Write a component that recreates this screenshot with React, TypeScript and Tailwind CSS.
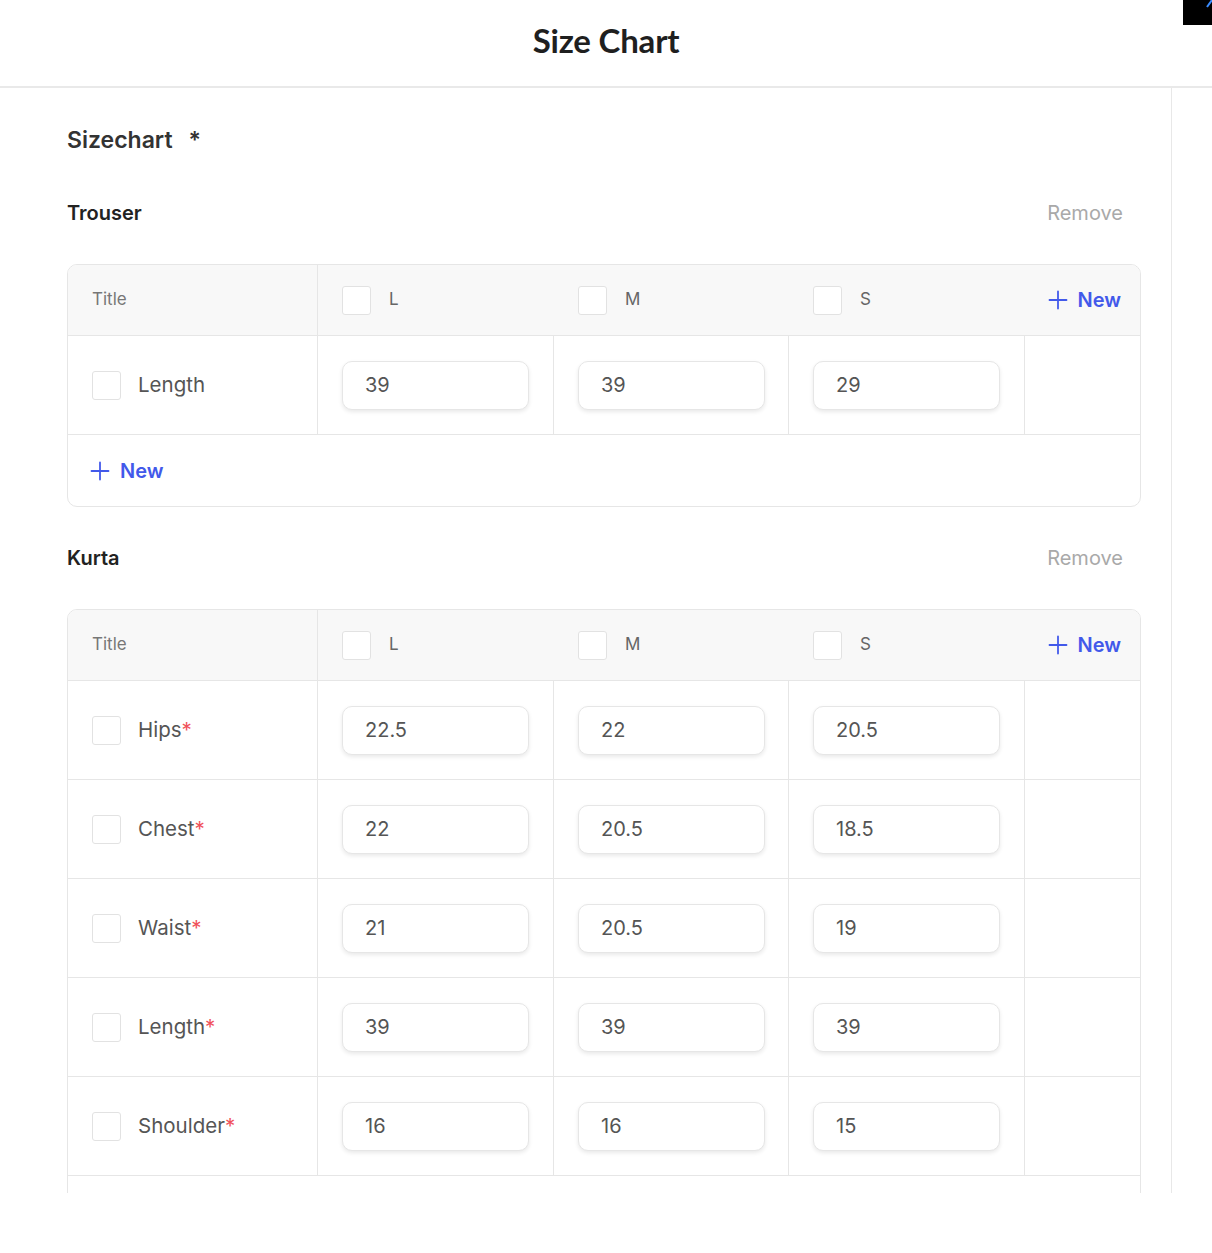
import React from "react";

const Plus = ({ className = "" }: { className?: string }) => (
  <svg viewBox="0 0 20 20" className={className} fill="none" stroke="currentColor" strokeWidth="1.8" strokeLinecap="round">
    <path d="M10 1.5v17M1.5 10h17" />
  </svg>
);

const Check = () => <div className="w-[29px] h-[29px] shrink-0 rounded-[3px] border border-[#e2e2e2] bg-white" />;

const Input = ({ v }: { v: string }) => (
  <div className="w-[187px] h-[49px] rounded-[10px] border border-[#e6e6e6] bg-white shadow-[0_2px_4px_rgba(0,0,0,0.09)] flex items-center pl-[22px] text-[20px] text-[#555]">
    {v}
  </div>
);

const NewBtn = () => (
  <div className="flex items-center gap-[10px] text-[#4259ea] font-semibold text-[20px]">
    <Plus className="w-[20px] h-[20px]" />
    <span>New</span>
  </div>
);

type Row = { label: string; req: boolean; vals: string[] };

const Table = ({ rows, footer }: { rows: Row[]; footer: boolean }) => (
  <div className="rounded-[10px] border border-[#e6e6e6] overflow-hidden">
    <div className="grid grid-cols-[250px_236px_235px_236px_1fr] h-[71px] bg-[#f8f8f8] border-b border-[#e6e6e6]">
      <div className="flex items-center pl-[24px] border-r border-[#e6e6e6] text-[17px] text-[#777]">Title</div>
      {["L", "M", "S"].map((s) => (
        <div key={s} className="flex items-center pl-[24px] gap-[18px] text-[17px] text-[#666]">
          <Check />
          <span>{s}</span>
        </div>
      ))}
      <div className="flex items-center justify-end pr-[19px]">
        <NewBtn />
      </div>
    </div>
    {rows.map((r, i) => (
      <div key={i} className="grid grid-cols-[250px_236px_235px_236px_1fr] h-[99px] border-b border-[#e6e6e6]">
        <div className="flex items-center pl-[24px] gap-[17px] border-r border-[#e6e6e6] text-[20.5px] text-[#555]">
          <Check />
          <span>
            {r.label}
            {r.req && <span className="text-[#f0525b]">*</span>}
          </span>
        </div>
        {r.vals.map((v, j) => (
          <div key={j} className="flex items-center pl-[24px] border-r border-[#e6e6e6]">
            <Input v={v} />
          </div>
        ))}
        <div />
      </div>
    ))}
    <div className="h-[71px] flex items-center pl-[22px]">{footer && <NewBtn />}</div>
  </div>
);

const Section = ({ name, rows, first }: { name: string; rows: Row[]; first?: boolean }) => (
  <div className={first ? "mt-[47px]" : "mt-[39px]"}>
    <div className="flex items-center justify-between pr-[18px] h-[24px]">
      <span className="text-[20px] font-semibold text-[#222]">{name}</span>
      <span className="text-[20px] text-[#a9a9a9]">Remove</span>
    </div>
    <div className="mt-[39px]">
      <Table rows={rows} footer={!!first} />
    </div>
  </div>
);

export default function App() {
  const trouser: Row[] = [{ label: "Length", req: false, vals: ["39", "39", "29"] }];
  const kurta: Row[] = [
    { label: "Hips", req: true, vals: ["22.5", "22", "20.5"] },
    { label: "Chest", req: true, vals: ["22", "20.5", "18.5"] },
    { label: "Waist", req: true, vals: ["21", "20.5", "19"] },
    { label: "Length", req: true, vals: ["39", "39", "39"] },
    { label: "Shoulder", req: true, vals: ["16", "16", "15"] },
  ];
  return (
    <div className="w-[1212px] h-[1253px] bg-white relative" style={{ fontFamily: "Inter, 'Noto Sans', sans-serif" }}>
      <div className="h-[88px] border-b-2 border-[#e9e9e9] flex items-center justify-center">
        <span className="text-[33px] font-bold text-[#1f1f1f] tracking-[-0.2px] pb-[4px]" style={{ fontFamily: "Lato, sans-serif" }}>
          Size Chart
        </span>
      </div>
      <div className="absolute top-0 right-0 w-[29px] h-[25px] bg-black overflow-hidden">
        <svg viewBox="0 0 29 25" className="w-full h-full">
          <path d="M24 7 L29 0" stroke="#3a8cff" strokeWidth="2" />
        </svg>
      </div>
      <div className="w-[1172px] h-[1105px] border-r border-[#e8e8e8] overflow-hidden pl-[67px] pr-[30px] pt-[38px]">
        <div className="h-[28px] flex items-center text-[23px] font-semibold text-[#333]">
          Sizechart<span className="ml-[16px] text-[#333]">*</span>
        </div>
        <Section name="Trouser" rows={trouser} first />
        <Section name="Kurta" rows={kurta} />
      </div>
    </div>
  );
}
